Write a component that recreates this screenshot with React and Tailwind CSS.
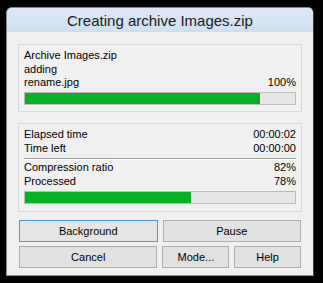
export default function App() {
  const body = { fontFamily: '"Liberation Sans", Arial, sans-serif' };
  const Row = ({ l, r }) => (
    <div className="flex justify-between h-[13.5px] leading-[13.5px]">
      <span>{l}</span>
      <span>{r}</span>
    </div>
  );
  const Row2 = ({ l, r }) => (
    <div className="flex justify-between h-[14px] leading-[14px]">
      <span>{l}</span>
      <span>{r}</span>
    </div>
  );
  const Bar = ({ pct }) => (
    <div className="h-[13px] border border-[#bcbcbc] bg-[#e6e6e6]">
      <div className="h-full bg-[#06b025]" style={{ width: pct }} />
    </div>
  );
  const Btn = ({ children, className = "", focused }) => (
    <div
      className={
        "h-[22px] flex items-center justify-center text-[11px] text-black border " +
        (focused ? "border-[#4a9ae6] bg-[#e5e5e5] " : "border-[#adadad] bg-[#e1e1e1] ") +
        className
      }
    >
      {children}
    </div>
  );
  return (
    <div className="w-[323px] h-[283px] bg-black pt-[7px] pl-[6px]" style={body}>
      <div className="w-[308px] h-[269px] rounded-t-[6px] border border-[#8a8a8a] border-r-[#3a3a3a] bg-[#f0f0f0] flex flex-col overflow-hidden">
        <div className="h-[24px] bg-gradient-to-b from-[#dde8f4] to-[#cfdff0] flex items-center justify-center text-[15px] text-[#1a1a1a] pt-[2px]">
          Creating archive Images.zip
        </div>
        <div className="px-[11px] pt-[12px] text-[11px] text-black flex flex-col">
          <div className="border border-[#d5d9dc] pt-[4px] pb-[6px] px-[5px]">
            <Row l="Archive Images.zip" r="" />
            <Row l="adding" r="" />
            <Row l="rename.jpg" r="100%" />
            <div className="mt-[2.5px]">
              <Bar pct="87%" />
            </div>
          </div>
          <div className="mt-[11px] border border-[#d5d9dc] pt-[3px] pb-[7px] px-[5px]">
            <Row2 l="Elapsed time" r="00:00:02" />
            <Row2 l="Time left" r="00:00:00" />
            <div className="mt-[3px] border-t border-[#a0a0a0] border-b border-b-white" />
            <Row2 l="Compression ratio" r="82%" />
            <Row2 l="Processed" r="78%" />
            <div className="mt-[3px]">
              <Bar pct="61.5%" />
            </div>
          </div>
          <div className="mt-[8px] mx-[1px] flex flex-col gap-[4px]">
            <div className="flex gap-[5px]">
              <Btn className="w-[139px]" focused>Background</Btn>
              <Btn className="w-[139px]">Pause</Btn>
            </div>
            <div className="flex gap-[5px]">
              <Btn className="w-[139px]">Cancel</Btn>
              <Btn className="w-[67px]">Mode...</Btn>
              <Btn className="w-[67px]">Help</Btn>
            </div>
          </div>
        </div>
      </div>
    </div>
  );
}
